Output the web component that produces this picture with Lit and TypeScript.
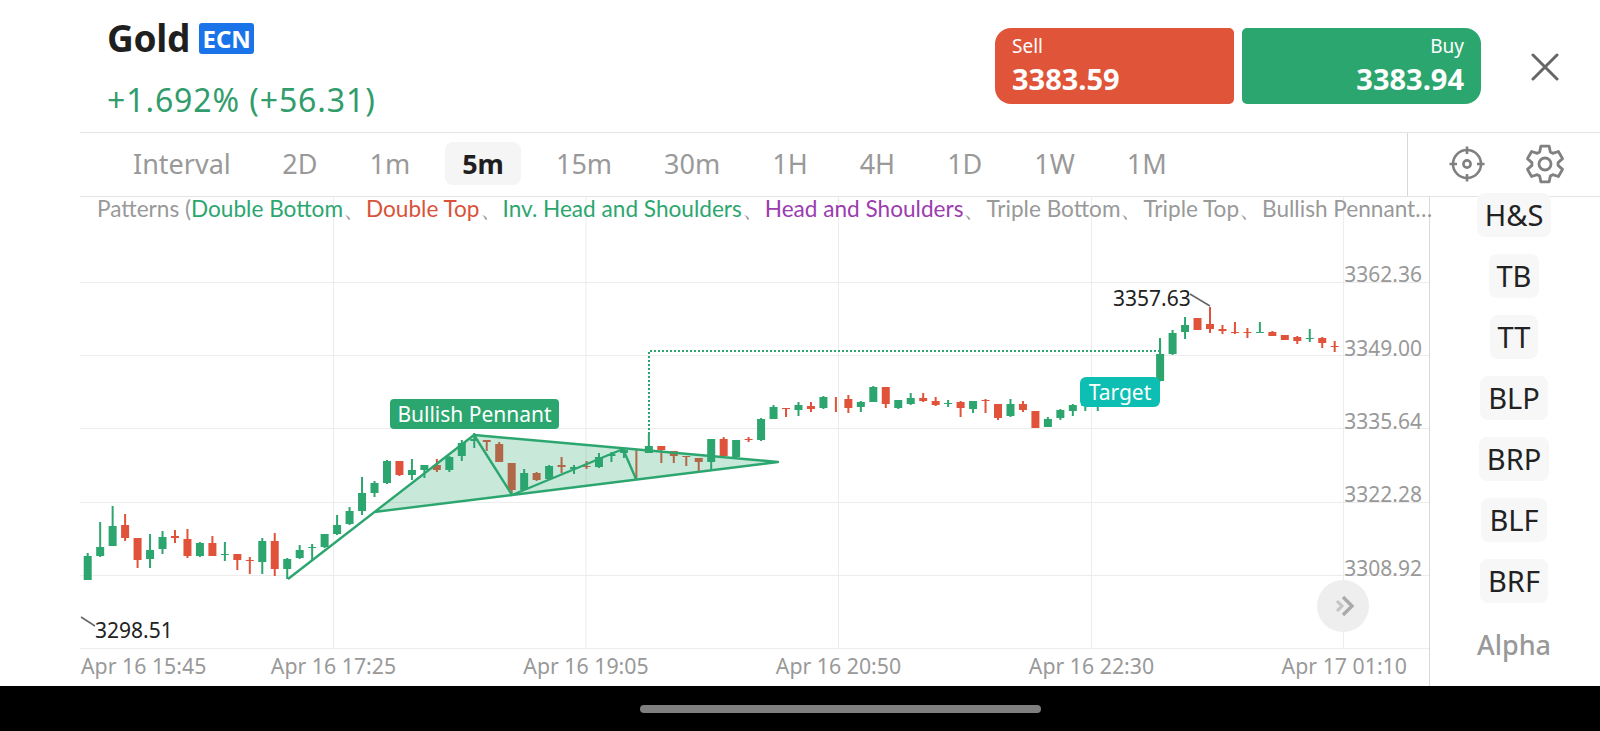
import { LitElement, html, svg, css } from 'lit'
import { customElement } from 'lit/decorators.js'

const GREEN = '#2ca56f'
const RED = '#e0533a'

// x-step between candles, first candle centre
const X0 = 87.7
const STEP = 12.47

// [up?, bodyTop, bodyBottom, wickTop, wickBottom] in chart pixels
type Candle = [number, number, number, number, number]
const CANDLES: Candle[] = [
  [1, 556, 580, 553, 580], [1, 547, 556, 522, 557], [1, 526, 546, 506, 546], [0, 525, 538, 514, 541],
  [0, 538, 560, 538, 568], [1, 550, 559, 534, 568], [1, 537, 549, 531, 554], [0, 536, 538, 530, 543],
  [0, 539, 556, 529, 558], [1, 543, 556, 542, 557], [0, 543, 556, 536, 556], [1, 554, 555, 542, 561],
  [0, 554, 560, 554, 570], [0, 560, 561, 557, 574], [1, 541, 562, 538, 574], [0, 541, 569, 533, 576],
  [1, 559, 569, 558, 579], [1, 550, 558, 545, 559], [1, 547, 548, 544, 560], [1, 534, 547, 534, 548],
  [1, 525, 534, 515, 535], [1, 511, 524, 507, 525], [1, 493, 511, 477, 515], [1, 483, 493, 481, 497],
  [1, 461, 483, 460, 484], [0, 461, 475, 461, 476], [1, 470, 475, 459, 480], [1, 465, 470, 465, 478],
  [0, 465, 470, 459, 472], [1, 457, 470, 456, 472], [1, 443, 456, 440, 461], [1, 439, 441, 433, 448],
  [0, 440, 442, 440, 451], [0, 444, 462, 442, 462], [0, 463, 490, 463, 493], [1, 473, 490, 469, 491],
  [0, 473, 480, 472, 481], [1, 466, 479, 465, 479], [0, 465, 467, 457, 473], [1, 467, 469, 465, 474],
  [0, 466, 467, 461, 469], [1, 457, 467, 453, 468], [1, 454, 456, 452, 462], [1, 450, 453, 448, 458],
  [0, 450, 450, 450, 479], [1, 446, 453, 434, 453], [0, 446, 450, 446, 463], [0, 451, 456, 451, 463],
  [0, 456, 457, 456, 466], [0, 458, 462, 458, 472], [1, 439, 462, 439, 470], [0, 439, 456, 437, 456],
  [1, 440, 457, 440, 458], [0, 439, 440, 437, 442], [1, 419, 440, 418, 441], [1, 407, 419, 405, 419],
  [0, 408, 409, 408, 417], [1, 405, 410, 402, 416], [0, 406, 409, 402, 412], [1, 397, 408, 396, 409],
  [0, 397, 397, 397, 412], [0, 399, 408, 395, 413], [1, 402, 407, 401, 412], [1, 387, 402, 386, 402],
  [0, 387, 404, 387, 408], [1, 400, 408, 400, 409], [1, 398, 404, 393, 405], [0, 398, 401, 393, 402],
  [0, 401, 405, 397, 406], [1, 403, 404, 400, 407], [0, 402, 408, 401, 417], [1, 401, 409, 401, 413],
  [0, 400, 401, 399, 413], [0, 404, 418, 404, 420], [1, 404, 416, 399, 417], [0, 404, 410, 401, 412],
  [0, 411, 428, 411, 428], [1, 419, 427, 417, 427], [1, 410, 418, 409, 420], [1, 405, 411, 404, 416],
  [1, 400, 406, 400, 411], [1, 398, 404, 396, 411], [1, 395, 402, 394, 404], [1, 393, 400, 392, 402],
  [1, 390, 398, 389, 400], [1, 385, 396, 383, 398], [1, 354, 381, 342, 381], [1, 333, 354, 330, 355],
  [1, 325, 332, 317, 339], [0, 318, 330, 318, 330], [0, 324, 329, 307, 333], [0, 329, 331, 325, 334],
  [0, 332, 333, 322, 334], [0, 332, 333, 328, 338], [1, 332, 333, 322, 333], [0, 332, 336, 331, 336],
  [0, 335, 340, 335, 340], [0, 337, 341, 336, 344], [1, 338, 339, 329, 342], [0, 338, 343, 337, 348],
  [0, 346, 347, 341, 352],
]

const TABS = ['2D', '1m', '5m', '15m', '30m', '1H', '4H', '1D', '1W', '1M']
const SIDE = ['H&S', 'TB', 'TT', 'BLP', 'BRP', 'BLF', 'BRF']
const GRID_Y = [282.5, 355.5, 428.5, 502.5, 575.5]
const GRID_X = [333.5, 586, 838.5, 1091.5, 1343.5]
const PRICES: [string, number][] = [['3362.36', 274], ['3349.00', 348], ['3335.64', 421], ['3322.28', 494], ['3308.92', 568]]
const DATES: [string, number][] = [['Apr 16 17:25', 333.5], ['Apr 16 19:05', 586], ['Apr 16 20:50', 838.5], ['Apr 16 22:30', 1091.5]]

// six blocky teeth, one pointing straight up
function gearPath() {
  const pts: string[] = []
  for (let i = 0; i < 6; i++) {
    const a = (i * 60 - 90) * Math.PI / 180
    const p = (r: number, d: number) => {
      const t = a + d * Math.PI / 180
      return `${(12 + r * Math.cos(t)).toFixed(2)} ${(12 + r * Math.sin(t)).toFixed(2)}`
    }
    pts.push(p(7.9, -24), p(11, -13), p(11, 13), p(7.9, 24))
  }
  return `M${pts.join(' L')} Z`
}

@customElement('app-root')
export class AppRoot extends LitElement {
  static styles = css`
    :host { display: block; width: 1600px; height: 731px; background: #fff; overflow: hidden; font-family: 'Noto Sans', sans-serif; color: #1f1f1f; }

    .header { height: 133px; box-sizing: border-box; margin-left: 80px; padding-left: 27px; display: flex; align-items: flex-start; border-bottom: 1px solid #e4e4e4; }
    .title { flex: 1; }
    .name { display: flex; align-items: center; gap: 9px; height: 32px; margin-top: 22px; }
    .name b { font-size: 37px; font-weight: 700; line-height: 32px; letter-spacing: -0.3px; }
    .ecn { width: 55px; height: 31px; border-radius: 3px; background: #1a73e8; color: #fff; font-size: 24px; font-weight: 700; display: flex; align-items: center; justify-content: center; }
    .change { margin-top: 24px; font-size: 32px; line-height: 44px; color: #319c6c; letter-spacing: 0.9px; }

    .trade { display: flex; gap: 8px; margin-top: 28px; }
    .trade div { width: 239px; height: 76px; box-sizing: border-box; padding: 5px 17px; color: #fff; display: flex; flex-direction: column; }
    .sell { background: #e0553a; border-radius: 16px 5px 5px 16px; }
    .buy { background: #2ca66f; border-radius: 5px 16px 16px 5px; align-items: flex-end; }
    .trade span { font-size: 19px; line-height: 26px; }
    .trade b { font-size: 29px; line-height: 40px; font-weight: 700; }
    .close { width: 128px; height: 132px; display: flex; justify-content: center; padding-top: 53px; box-sizing: border-box; margin-right: -9px; }

    .toolbar { height: 64px; box-sizing: border-box; margin-left: 80px; display: flex; border-bottom: 1px solid #e4e4e4; }
    .tabs { flex: 1; display: flex; align-items: center; padding: 0 0 2px 53px; }
    .tabs span { font-size: 27px; color: #999; height: 43px; line-height: 43px; }
    .tabs .label { margin-right: 17px; }
    .tabs .tab { padding: 0 17.5px; margin-left: 17px; border-radius: 8px; }
    .tabs .on { background: #f5f5f5; color: #1f1f1f; font-weight: 700; }
    .tools { width: 193px; box-sizing: border-box; border-left: 1px solid #d8d8d8; display: flex; align-items: center; gap: 40px; padding: 0 0 2px 41px; }

    .main { height: 489px; display: flex; }
    .chart { position: relative; width: 1350px; box-sizing: border-box; margin-left: 80px; border-right: 1px solid #d8d8d8; }
    .chart svg { display: block; }
    .chart text { font-family: 'Noto Sans', sans-serif; }
    .patterns { position: absolute; left: 17px; top: 0; height: 24px; line-height: 24px; font-size: 22.6px; color: #999; white-space: nowrap; font-family: Lato, sans-serif; }
    .patterns .g { color: #2ca66f; }
    .patterns .r { color: #d9533a; }
    .patterns .p { color: #9b3cb0; }
    .tag { position: absolute; color: #fff; font-size: 21px; border-radius: 4px; display: flex; align-items: center; justify-content: center; }
    .pennant { left: 310px; top: 202px; width: 169px; height: 30px; background: #2ca66f; }
    .target { left: 1000px; top: 180px; width: 80px; height: 30px; background: #0dbfb3; border-radius: 6px; }

    .side { flex: 1; overflow: hidden; display: flex; flex-direction: column; align-items: center; gap: 17.5px; margin-top: -4px; margin-left: -2px; }
    .side span { font-size: 29px; line-height: 43.5px; height: 43.5px; padding: 0 8px; border-radius: 8px; background: #f7f7f7; color: #222; flex: none; }
    .side .alpha { background: none; color: #999; font-size: 27px; font-weight: 500; margin-top: 3px; }

    .nav { height: 45px; background: #000; display: flex; justify-content: center; padding: 19px 0 0 80px; box-sizing: border-box; }
    .nav div { width: 401px; height: 8px; border-radius: 4px; background: #7f7f7f; }
  `

  private renderCandles() {
    return CANDLES.map((c, i) => {
      const x = X0 + STEP * i
      const color = c[0] ? GREEN : RED
      return svg`
        <rect x=${x - 1} y=${c[3]} width="2" height=${c[4] - c[3]} fill=${color}></rect>
        ${c[2] > c[1] ? svg`<rect x=${x - 4} y=${c[1]} width="8" height=${c[2] - c[1]} fill=${color}></rect>` : ''}
      `
    })
  }

  private renderChart() {
    return html`
      <svg width="1349" height="489" viewBox="80 197 1349 489">
        ${GRID_Y.map(y => svg`<line x1="80" x2="1430" y1=${y} y2=${y} stroke="#ececec"></line>`)}
        <line x1="80" x2="1430" y1="648.5" y2="648.5" stroke="#ececec"></line>
        ${GRID_X.map(x => svg`<line x1=${x} x2=${x} y1="196" y2="649" stroke="#ececec"></line>`)}
        ${this.renderCandles()}
        <polygon points="374,512 474,435 778,462" fill="#2ca66f" fill-opacity="0.26"></polygon>
        <polyline points="288,579 474,435 778,462 374,512" fill="none" stroke="#2ca66f" stroke-width="2.4" stroke-linejoin="round"></polyline>
        <polyline points="474,435 512,495 623,449 636,479" fill="none" stroke="#2ca66f" stroke-width="2.4" stroke-linejoin="round"></polyline>
        <polyline points="649,434 649,351 1160,351" fill="none" stroke="#2ca66f" stroke-width="2" stroke-dasharray="2 2"></polyline>
        <path d="M1160 338 L1160 380 L1154 392" fill="none" stroke="#2ca66f" stroke-width="2"></path>
        <path d="M81 617 L95 626" stroke="#666" stroke-width="1.5" fill="none"></path>
        <path d="M1190 294 L1210 306" stroke="#666" stroke-width="1.5" fill="none"></path>
        <text x="95" y="638" font-size="21" fill="#222">3298.51</text>
        <text x="1113" y="306" font-size="21" fill="#222">3357.63</text>
        ${PRICES.map(([t, y]) => svg`<text x="1422" y=${y + 7.5} text-anchor="end" font-size="21" fill="#999">${t}</text>`)}
        <text x="81" y="673.5" font-size="21.300" fill="#999">Apr 16 15:45</text>
        ${DATES.map(([t, x]) => svg`<text x=${x} y="673.5" text-anchor="middle" font-size="21.300" fill="#999">${t}</text>`)}
        <text x="1407" y="673.5" text-anchor="end" font-size="21.300" fill="#999">Apr 17 01:10</text>
        <circle cx="1343" cy="606" r="26" fill="#eeeeee"></circle>
        <path d="M1337 601 L1342 606 L1337 611" fill="none" stroke="#c4c4c4" stroke-width="3"></path>
        <path d="M1343 597 L1352 606 L1343 615" fill="none" stroke="#aaaaaa" stroke-width="3.4"></path>
      </svg>
    `
  }

  render() {
    return html`
      <div class="header">
        <div class="title">
          <div class="name"><b>Gold</b><span class="ecn">ECN</span></div>
          <div class="change">+1.692% (+56.31)</div>
        </div>
        <div class="trade">
          <div class="sell"><span>Sell</span><b>3383.59</b></div>
          <div class="buy"><span>Buy</span><b>3383.94</b></div>
        </div>
        <div class="close">
          <svg width="28" height="28" viewBox="0 0 28 28"><path d="M2 2 L26 26 M26 2 L2 26" stroke="#666" stroke-width="3" stroke-linecap="round"></path></svg>
        </div>
      </div>
      <div class="toolbar">
        <div class="tabs">
          <span class="label">Interval</span>
          ${TABS.map(t => html`<span class="tab ${t === '5m' ? 'on' : ''}">${t}</span>`)}
        </div>
        <div class="tools">
          <svg width="36" height="36" viewBox="0 0 36 36" fill="none" stroke="#808080" stroke-width="2.6">
            <circle cx="18" cy="18" r="14"></circle>
            <circle cx="18" cy="18" r="3.6"></circle>
            <path d="M18 0.5 V8 M18 28 V35.500 M0.500 18 H8 M28 18 H35.500"></path>
          </svg>
          <svg width="40" height="40" viewBox="0 0 24 24" fill="none" stroke="#808080" stroke-width="1.7" stroke-linejoin="round">
            <path d=${gearPath()}></path>
            <circle cx="12" cy="12" r="3.6"></circle>
          </svg>
        </div>
      </div>
      <div class="main">
        <div class="chart">
          ${this.renderChart()}
          <div class="patterns">Patterns (<span class="g">Double Bottom</span>、<span class="r">Double Top</span>、<span class="g">Inv. Head and Shoulders</span>、<span class="p">Head and Shoulders</span>、Triple Bottom、Triple Top、Bullish Pennant…</div>
          <div class="tag pennant">Bullish Pennant</div>
          <div class="tag target">Target</div>
        </div>
        <div class="side">
          ${SIDE.map(s => html`<span>${s}</span>`)}
          <span class="alpha">Alpha</span>
        </div>
      </div>
      <div class="nav"><div></div></div>
    `
  }
}
